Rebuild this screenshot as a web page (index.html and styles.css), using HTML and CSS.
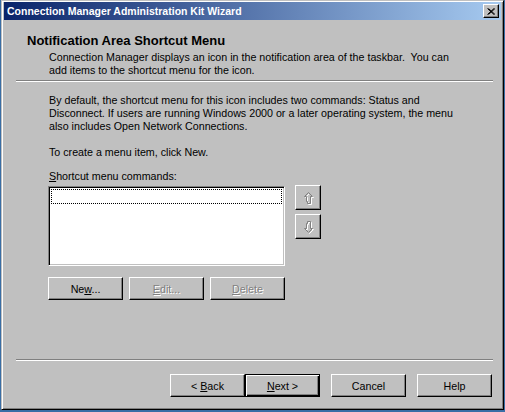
FILE: index.html
```html
<!DOCTYPE html>
<html lang="en">
  <head>
    <meta charset="UTF-8" />
    <title>Connection Manager Administration Kit Wizard</title>
    <link rel="stylesheet" href="styles.css">
  </head>
  <body>
    <div class="window">
      <div class="titlebar">
        <span class="title">Connection Manager Administration Kit Wizard</span>
        <span class="close">
          <svg width="8" height="7" viewBox="0 0 8 7">
            <path d="M0.5 0.5 L7 6.5 M1.5 0.5 L8 6.5 M7 0.5 L0.5 6.5 M8 0.5 L1.5 6.5" stroke="#000" stroke-width="1" fill="none" />
          </svg>
        </span>
      </div>

      <!-- header -->
      <div class="header">
        <h1>Notification Area Shortcut Menu</h1>
        <p>Connection Manager displays an icon in the notification area of the taskbar.&nbsp; You can<br>add items to the shortcut menu for the icon.</p>
      </div>
      <div class="sep"></div>

      <!-- page body -->
      <div class="content">
        <p>By default, the shortcut menu for this icon includes two commands: Status and<br>Disconnect. If users are running Windows 2000 or a later operating system, the menu<br>also includes Open Network Connections.</p>
        <p class="gap">To create a menu item, click New.</p>
        <p class="label"><u>S</u>hortcut menu commands:</p>

        <div class="list-row">
          <div class="listbox">
            <div class="focus"></div>
          </div>
          <div class="arrows">
            <button class="btn arrow">
              <svg width="11" height="14" viewBox="0 0 11 14">
                <path d="M5.5 1.5 L9.5 5.5 L7.5 5.5 L7.5 12.5 L4.5 12.5 L4.5 10.5 L3.5 10.5 L3.5 5.5 L1.5 5.5 Z" transform="translate(1 1)" fill="none" stroke="#fff" />
                <path d="M5.5 1.5 L9.5 5.5 L7.5 5.5 L7.5 12.5 L4.5 12.5 L4.5 10.5 L3.5 10.5 L3.5 5.5 L1.5 5.5 Z" fill="none" stroke="#808080" />
              </svg>
            </button>
            <button class="btn arrow">
              <svg width="11" height="14" viewBox="0 0 11 14">
                <path d="M5.5 12.5 L9.5 8.5 L7.5 8.5 L7.5 1.5 L4.5 1.5 L4.5 3.5 L3.5 3.5 L3.5 8.5 L1.5 8.5 Z" transform="translate(1 1)" fill="none" stroke="#fff" />
                <path d="M5.5 12.5 L9.5 8.5 L7.5 8.5 L7.5 1.5 L4.5 1.5 L4.5 3.5 L3.5 3.5 L3.5 8.5 L1.5 8.5 Z" fill="none" stroke="#808080" />
              </svg>
            </button>
          </div>
        </div>

        <div class="btn-row">
          <button class="btn">Ne<u>w</u>...</button>
          <button class="btn" disabled><u>E</u>dit...</button>
          <button class="btn" disabled><u>D</u>elete</button>
        </div>
      </div>

      <div class="sep bottom"></div>

      <!-- wizard buttons -->
      <div class="footer">
        <button class="btn">&lt; <u>B</u>ack</button>
        <button class="btn default"><u>N</u>ext &gt;</button>
        <button class="btn spaced">Cancel</button>
        <button class="btn spaced">Help</button>
      </div>
    </div>
  </body>
</html>
```

FILE: styles.css
```css
body {
  margin: 0;
  padding: 0;
  background-color: #3a6ea5;
  font-family: "Liberation Sans", Arial, sans-serif;
  font-size: 10.7px;
  color: #000;
}

.window {
  box-sizing: border-box;
  width: 503px;
  height: 410px;
  margin-left: 1px;
  padding: 1px 2px 2px 2px;
  background-color: #c0c0c0;
  border: 1px solid;
  border-color: #c0c0c0 #000 #000 #c0c0c0;
  box-shadow: inset 1px 1px #fff, inset -1px -1px #808080;
}

.titlebar {
  height: 18px;
  display: flex;
  align-items: center;
  justify-content: space-between;
  padding: 0 2px 0 3px;
  background: linear-gradient(to right, #0a246a, #a6caf0);
}
.title {
  color: #fff;
  font-weight: bold;
  font-size: 10.5px;
}
.close {
  box-sizing: border-box;
  width: 16px;
  height: 14px;
  display: flex;
  align-items: center;
  justify-content: center;
  background-color: #c0c0c0;
  border: 1px solid;
  border-color: #fff #000 #000 #fff;
  box-shadow: inset -1px -1px #808080;
}

.header {
  padding: 13px 0 0 23px;
  height: 47px;
}
.header h1 {
  margin: 0;
  font-size: 13px;
  line-height: 16px;
  font-weight: bold;
}
.header p {
  margin: 2px 0 0 22px;
  line-height: 13px;
}

.sep {
  margin: 0 8px 0 12px;
  height: 0;
  border-top: 1px solid #808080;
  border-bottom: 1px solid #fff;
}
.sep.bottom {
  margin-top: 59px;
}

.content {
  padding: 12px 0 0 44px;
  line-height: 13px;
}
.content p {
  margin: 0;
  padding-left: 1px;
}
.content p.gap {
  margin-top: 13px;
}
.content p.label {
  margin-top: 11px;
}

.list-row {
  display: flex;
  margin-top: 2px;
}
.listbox {
  box-sizing: border-box;
  width: 237px;
  height: 80px;
  margin-top: 1px;
  padding: 2px;
  background-color: #fff;
  border: 1px solid;
  border-color: #808080 #fff #fff #808080;
  box-shadow: inset 1px 1px #000, inset -1px -1px #c0c0c0;
}
.focus {
  height: 13px;
  border: 1px dotted #000;
}
.arrows {
  display: flex;
  flex-direction: column;
  gap: 4px;
  margin-left: 10px;
}

.btn {
  box-sizing: border-box;
  width: 75px;
  height: 23px;
  padding: 0;
  background-color: #c0c0c0;
  font-family: "Liberation Sans", Arial, sans-serif;
  font-size: 10.7px;
  color: #000;
  border: 1px solid;
  border-color: #fff #000 #000 #fff;
  box-shadow: inset -1px -1px #808080;
}
.btn:disabled {
  color: #808080;
  text-shadow: 1px 1px #fff;
}
.btn.arrow {
  width: 26px;
  height: 25px;
  display: flex;
  align-items: center;
  justify-content: center;
}

.btn-row {
  display: flex;
  gap: 6px;
  margin-top: 11px;
}

.footer {
  display: flex;
  padding: 13px 0 0 166px;
}
.footer .btn.default {
  border: 1px solid #000;
  box-shadow: inset 1px 1px #fff, inset -1px -1px #000, inset -2px -2px #808080;
}
.footer .btn.spaced {
  margin-left: 11px;
}
```
